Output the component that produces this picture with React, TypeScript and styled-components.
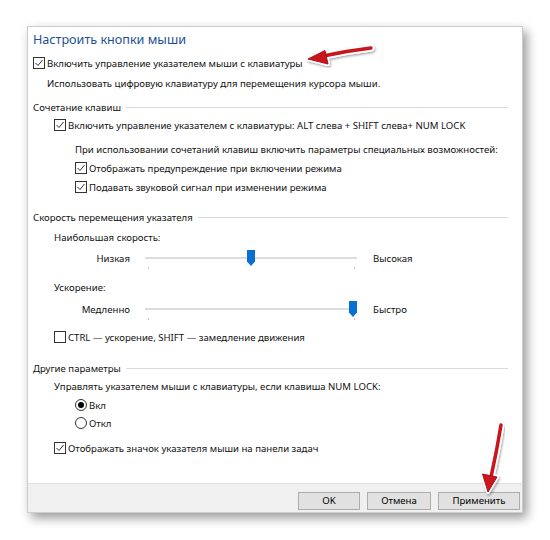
import styled, { createGlobalStyle } from "styled-components";

const GlobalStyle = createGlobalStyle`
  html, body {
    margin: 0;
    padding: 0;
    background: #fff;
  }
  body {
    font-family: "Noto Sans", "Open Sans", sans-serif;
  }
`;

const Page = styled.div`
  position: relative;
  width: 550px;
  height: 540px;
  padding: 26px 0 0 27px;
  box-sizing: border-box;
`;

const Window = styled.div`
  width: 496px;
  height: 487px;
  box-sizing: border-box;
  border: 1px solid #cdcdcd;
  background: #fff;
  box-shadow: 4px 5px 10px rgba(0, 0, 0, 0.4);
  display: flex;
  flex-direction: column;
`;

const Content = styled.div`
  flex: 1;
  padding: 1px 14px 0 5px;
  display: flex;
  flex-direction: column;
`;

const Title = styled.div`
  height: 22px;
  display: flex;
  align-items: center;
  font-size: 12.6px;
  color: #1e4f91;
  white-space: nowrap;
`;

const Row = styled.div<{ $mt: number; $indent: number }>`
  display: flex;
  align-items: center;
  height: 18px;
  margin-top: ${(p) => p.$mt}px;
  padding-left: ${(p) => p.$indent}px;
  font-size: 9.6px;
  color: #111;
  white-space: nowrap;
`;

const GroupLine = styled.div`
  flex: 1;
  height: 1px;
  margin-left: 5px;
  background: #dadada;
`;

const Box = styled.span`
  width: 12px;
  height: 12px;
  box-sizing: border-box;
  border: 1px solid #333;
  background: #fff;
  margin-right: 2px;
  display: inline-flex;
  flex-shrink: 0;
`;

const RadioCircle = styled.span<{ $on: boolean }>`
  width: 12px;
  height: 12px;
  box-sizing: border-box;
  border: 1px solid #333;
  border-radius: 50%;
  margin-right: 2px;
  display: inline-flex;
  align-items: center;
  justify-content: center;
  &::after {
    content: "";
    width: 6px;
    height: 6px;
    border-radius: 50%;
    background: ${(p) => (p.$on ? "#000" : "transparent")};
  }
`;

const SliderLabel = styled.span<{ $align: "left" | "right" }>`
  width: ${(p) => (p.$align === "right" ? "76px" : "auto")};
  text-align: ${(p) => p.$align};
`;

const Track = styled.div`
  position: relative;
  width: 212px;
  height: 18px;
  margin: 0 16px 0 15px;
  &::before {
    content: "";
    position: absolute;
    left: 0;
    right: 0;
    top: 8px;
    height: 2px;
    background: #dcdcdc;
  }
`;

const Tick = styled.span<{ $left: number }>`
  position: absolute;
  top: 18px;
  left: ${(p) => p.$left}px;
  width: 1px;
  height: 2px;
  background: #c4c4c4;
`;

const Thumb = styled.svg`
  position: absolute;
  top: 1px;
  width: 8px;
  height: 16px;
`;

const Footer = styled.div`
  height: 29px;
  border-top: 1px solid #dfdfdf;
  background: #f0f0f0;
  display: flex;
  justify-content: flex-end;
  align-items: flex-start;
  gap: 7px;
  padding: 8px 2px 0 0;
  box-sizing: border-box;
`;

const Button = styled.button<{ $w: number }>`
  width: ${(p) => p.$w}px;
  height: 18px;
  padding: 0;
  border: 1px solid #adadad;
  background: #e1e1e1;
  font-family: inherit;
  font-size: 9.6px;
  color: #000;
  line-height: 16px;
`;

const Overlay = styled.svg`
  position: absolute;
  left: 0;
  top: 0;
  pointer-events: none;
`;

const Check = ({ checked, children }: { checked: boolean; children: React.ReactNode }) => (
  <>
    <Box>
      {checked && (
        <svg width="10" height="10" viewBox="0 0 10 10">
          <polyline points="1.5,5 4,7.5 8.5,2" fill="none" stroke="#333" strokeWidth="1" />
        </svg>
      )}
    </Box>
    <span>{children}</span>
  </>
);

const Slider = ({ min, max, value }: { min: string; max: string; value: number }) => (
  <>
    <SliderLabel $align="right">{min}</SliderLabel>
    <Track>
      <Thumb viewBox="0 0 8 16" style={{ left: value * 204 }}>
        <path d="M0 0 H8 V11.5 L4 16 L0 11.5 Z" fill="#0a6fd2" />
      </Thumb>
      <Tick $left={3} />
      <Tick $left={209} />
    </Track>
    <SliderLabel $align="left">{max}</SliderLabel>
  </>
);

const Arrow = ({ d, head }: { d: string; head: string }) => (
  <g filter="url(#shadow)">
    <path d={d} fill="none" stroke="#fff" strokeWidth="7" strokeLinecap="round" />
    <polygon points={head} fill="#fff" stroke="#fff" strokeWidth="4" strokeLinejoin="round" />
    <path d={d} fill="none" stroke="#c8141e" strokeWidth="3.5" strokeLinecap="round" />
    <polygon points={head} fill="#c8141e" stroke="#b0101a" strokeWidth="1" strokeLinejoin="round" />
  </g>
);

export default function App() {
  return (
    <>
      <GlobalStyle />
      <Page>
        <Window>
          <Content>
            <Title>Настроить кнопки мыши</Title>
            <Row $mt={4} $indent={0}>
              <Check checked>Включить управление указателем мыши с клавиатуры</Check>
            </Row>
            <Row $mt={2} $indent={14}>
              Использовать цифровую клавиатуру для перемещения курсора мыши.
            </Row>

            <Row $mt={6} $indent={0}>
              Сочетание клавиш
              <GroupLine />
            </Row>
            <Row $mt={0} $indent={21}>
              <Check checked>
                Включить управление указателем с клавиатуры: ALT слева + SHIFT слева+ NUM LOCK
              </Check>
            </Row>
            <Row $mt={6} $indent={42}>
              При использовании сочетаний клавиш включить параметры специальных возможностей:
            </Row>
            <Row $mt={1} $indent={42}>
              <Check checked>Отображать предупреждение при включении режима</Check>
            </Row>
            <Row $mt={1} $indent={42}>
              <Check checked>Подавать звуковой сигнал при изменении режима</Check>
            </Row>

            <Row $mt={12} $indent={0}>
              Скорость перемещения указателя
              <GroupLine />
            </Row>
            <Row $mt={2} $indent={21}>
              Наибольшая скорость:
            </Row>
            <Row $mt={3} $indent={21}>
              <Slider min="Низкая" max="Высокая" value={0.5} />
            </Row>
            <Row $mt={11} $indent={21}>
              Ускорение:
            </Row>
            <Row $mt={4} $indent={21}>
              <Slider min="Медленно" max="Быстро" value={1} />
            </Row>
            <Row $mt={10} $indent={21}>
              <Check checked={false}>CTRL — ускорение, SHIFT — замедление движения</Check>
            </Row>

            <Row $mt={13} $indent={0}>
              Другие параметры
              <GroupLine />
            </Row>
            <Row $mt={0} $indent={21}>
              Управлять указателем мыши с клавиатуры, если клавиша NUM LOCK:
            </Row>
            <Row $mt={1} $indent={42}>
              <RadioCircle $on />
              Вкл
            </Row>
            <Row $mt={0} $indent={42}>
              <RadioCircle $on={false} />
              Откл
            </Row>
            <Row $mt={7} $indent={21}>
              <Check checked>Отображать значок указателя мыши на панели задач</Check>
            </Row>
          </Content>
          <Footer>
            <Button $w={62}>OK</Button>
            <Button $w={64}>Отмена</Button>
            <Button $w={82}>Применить</Button>
          </Footer>
        </Window>

        <Overlay width="550" height="540" viewBox="0 0 550 540">
          <defs>
            <filter id="shadow" x="-20%" y="-20%" width="140%" height="140%">
              <feDropShadow dx="1" dy="1.5" stdDeviation="1.2" floodColor="#000" floodOpacity="0.35" />
            </filter>
          </defs>
          <Arrow d="M371 48 Q345 51 318 57" head="308,59 325,50.5 328,64" />
          <Arrow d="M501 425 Q497 450 491 477" head="488,492 482.5,474 497,477" />
        </Overlay>
      </Page>
    </>
  );
}
